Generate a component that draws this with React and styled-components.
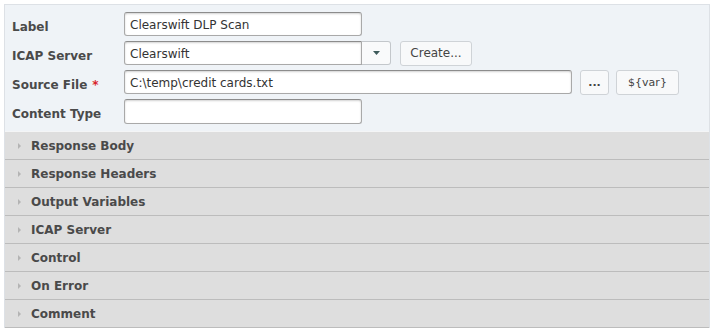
import React from 'react'
import styled, { createGlobalStyle } from 'styled-components'

const GlobalStyle = createGlobalStyle`
  body {
    margin: 0;
    background: #fff;
    font-family: "DejaVu Sans", Verdana, sans-serif;
  }
`

const Panel = styled.div`
  margin: 4px 0 0 4px;
  width: 704px;
  border: 1px solid #dde1e6;
  border-bottom: none;
`

const Form = styled.div`
  background: #eff3f7;
  padding: 7px 7px 8px;
  display: grid;
  grid-template-columns: 112px 1fr;
  row-gap: 5px;
  align-items: center;
`

const Label = styled.label`
  font-size: 12px;
  font-weight: bold;
  color: #4a4a4a;
  height: 24px;
  line-height: 31px;
`

const Required = styled.span`
  color: #d9242b;
  margin-left: 5px;
`

const Field = styled.div`
  display: flex;
  align-items: center;
  height: 24px;
`

const Input = styled.input`
  box-sizing: border-box;
  width: ${p => p.$width}px;
  height: ${p => p.$height || 24}px;
  border: 1px solid #a9a9a9;
  border-top-color: #8c8c8c;
  border-radius: 3px;
  box-shadow: inset 0 1px 2px rgba(0, 0, 0, 0.18);
  background: #fff;
  padding: 1px 5px 0;
  font-family: "DejaVu Sans", Verdana, sans-serif;
  font-size: 12px;
  color: #333;
  outline: none;
`

const SelectInput = styled(Input)`
  border-radius: 3px 0 0 3px;
`

const DropButton = styled.div`
  box-sizing: border-box;
  width: 29px;
  height: 24px;
  border: 1px solid #c3c7cb;
  border-left: none;
  border-radius: 0 3px 3px 0;
  background: #f9fafb;
  display: flex;
  align-items: center;
  justify-content: center;
`

const Button = styled.button`
  box-sizing: border-box;
  height: 25px;
  margin-left: ${p => p.$gap}px;
  padding: 0 ${p => p.$pad ?? 8}px;
  border: 1px solid #cfd3d7;
  border-radius: 3px;
  background: #f8f9fa;
  font-family: "DejaVu Sans", Verdana, sans-serif;
  font-size: ${p => p.$size || 11}px;
  font-weight: ${p => (p.$bold ? 'bold' : 'normal')};
  color: #444;
  display: flex;
  align-items: center;
  justify-content: center;
  width: ${p => p.$w}px;
`

const Section = styled.div`
  display: flex;
  align-items: center;
  height: 27px;
  background: #dedede;
  border-bottom: 1px solid #bcbcbc;
  &:first-of-type {
    border-top: 1px solid #f4f5f6;
  }
`

const Arrow = styled.span`
  width: 0;
  height: 0;
  margin: 0 10px 0 13px;
  border-top: 3.5px solid transparent;
  border-bottom: 3.5px solid transparent;
  border-left: 3.5px solid #b4b4b4;
`

const SectionTitle = styled.span`
  font-size: 12px;
  font-weight: bold;
  color: #4a4a4a;
`

const sections = [
  'Response Body',
  'Response Headers',
  'Output Variables',
  'ICAP Server',
  'Control',
  'On Error',
  'Comment',
]

function App() {
  return (
    <>
      <GlobalStyle />
      <Panel>
        <Form>
          <Label>Label</Label>
          <Field>
            <Input $width={238} defaultValue="Clearswift DLP Scan" />
          </Field>

          <Label>ICAP Server</Label>
          <Field>
            <SelectInput $width={238} defaultValue="Clearswift" />
            <DropButton>
              <svg width="7" height="4" viewBox="0 0 7 4">
                <path d="M0 0 L7 0 L3.5 4 Z" fill="#3e5b5b" />
              </svg>
            </DropButton>
            <Button $gap={9} $size={12} $w={72}>Create...</Button>
          </Field>

          <Label>
            Source File<Required>*</Required>
          </Label>
          <Field>
            <Input $width={448} defaultValue="C:\temp\credit cards.txt" />
            <Button $gap={8} $bold $w={29} $pad={0}>...</Button>
            <Button $gap={7} $w={63}>${'{var}'}</Button>
          </Field>

          <Label>Content Type</Label>
          <Field>
            <Input $width={238} $height={25} defaultValue="" />
          </Field>
        </Form>
        <div>
          {sections.map(title => (
            <Section key={title}>
              <Arrow />
              <SectionTitle>{title}</SectionTitle>
            </Section>
          ))}
        </div>
      </Panel>
    </>
  )
}

export default App
